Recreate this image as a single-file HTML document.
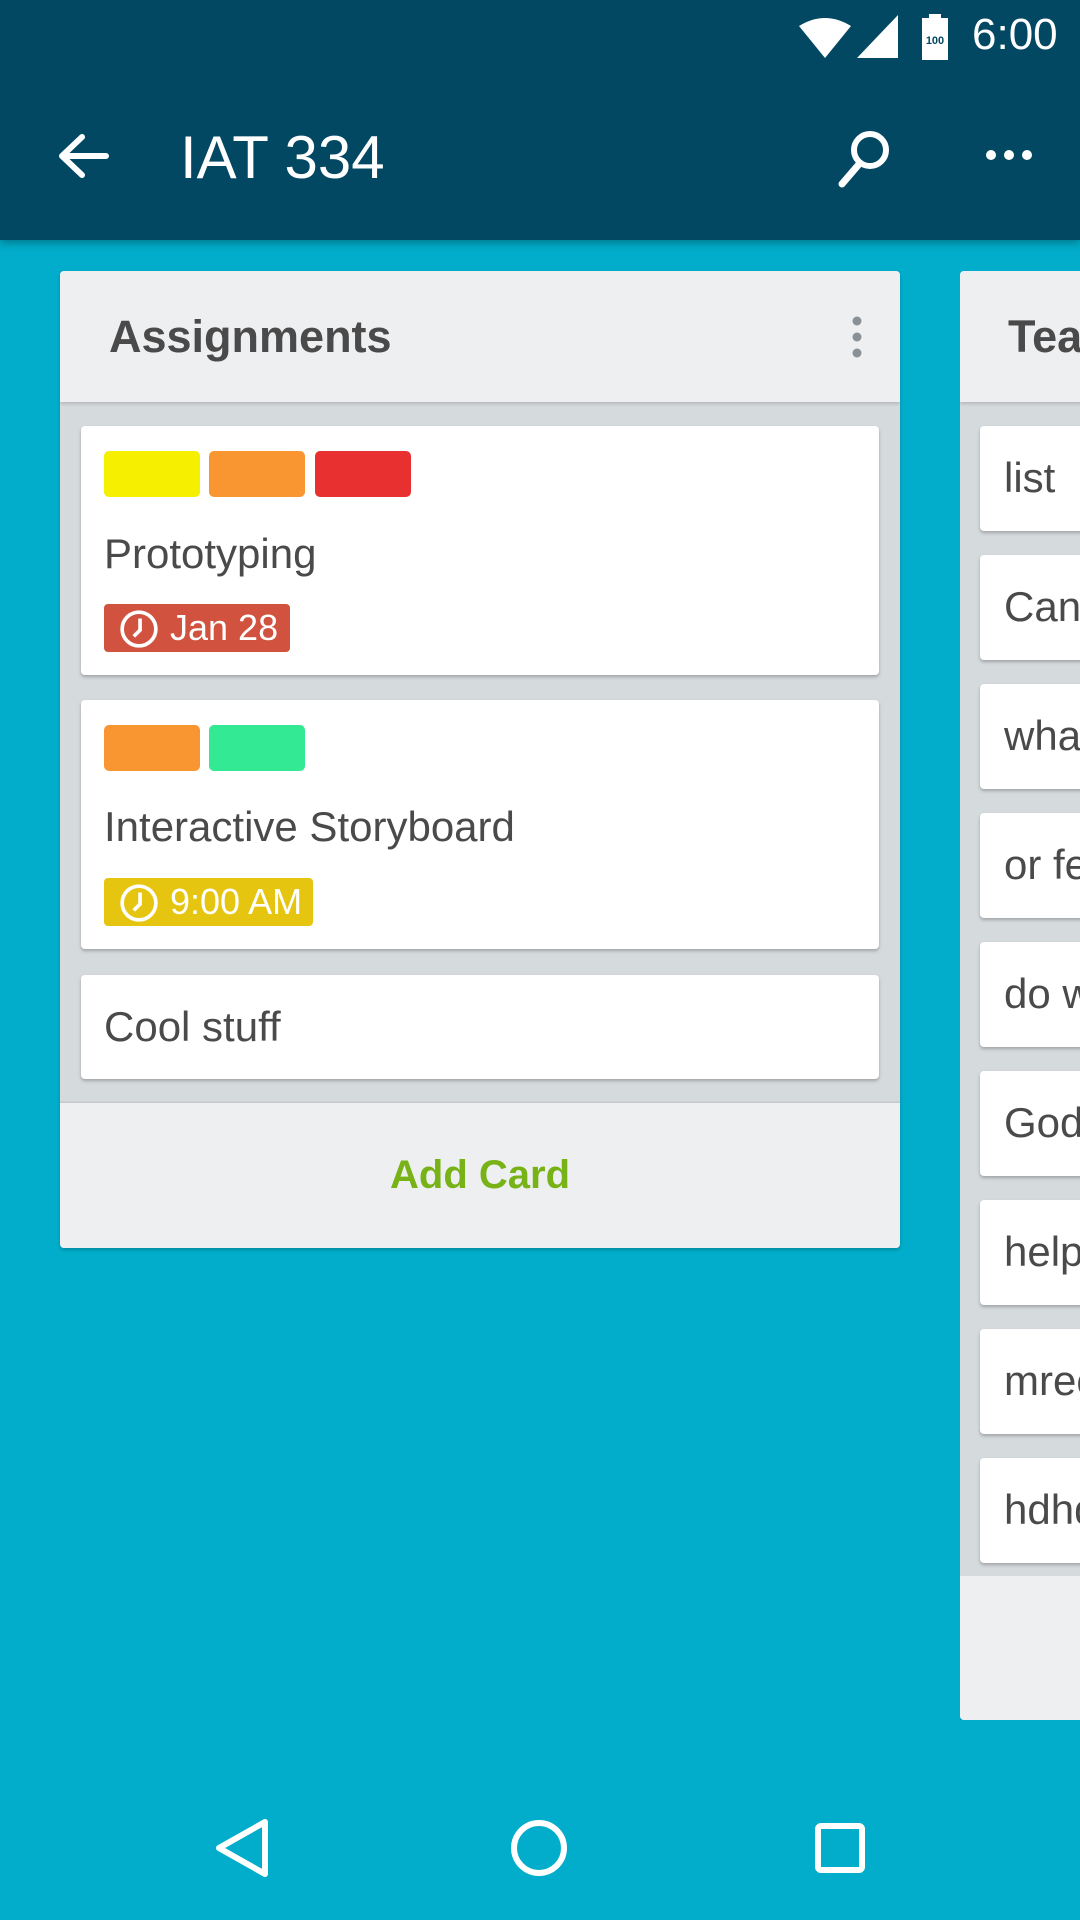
<!DOCTYPE html>
<html><head><meta charset="utf-8"><style>
*{margin:0;padding:0;box-sizing:border-box}
html,body{width:1080px;height:1920px;overflow:hidden}
body{background:#01adca;font-family:"Liberation Sans",sans-serif;position:relative}
.abs{position:absolute}
.bar{left:0;top:0;width:1080px;height:240px;background:#024862;box-shadow:0 3px 8px rgba(0,0,0,.3);z-index:2}
.list{background:#d5dadd;border-radius:4px;overflow:hidden;box-shadow:0 2px 3px rgba(0,0,0,.2)}
.hdr{background:#eeeff1;height:131px;box-shadow:0 2px 3px rgba(0,0,0,.15);position:relative}
.card{background:#fff;border-radius:4px;box-shadow:0 2px 3px rgba(0,0,0,.25);position:absolute}
.lbl{position:absolute;height:46px;width:96px;border-radius:5px}
.t{position:absolute;color:#4a4a4a;font-size:42px}
.badge{position:absolute;height:48px;border-radius:4px;color:#fff;font-size:36px;line-height:48px;padding-left:66px}
.badge svg{position:absolute;left:15px;top:5px}
</style></head><body>
<div class="abs bar">
 <svg class="abs" style="left:795px;top:14px" width="270" height="50" viewBox="0 0 270 50">
  <path d="M4 12 Q30 -4 56 12 L30 44 Z" fill="#fff"/>
  <path d="M62 44 L103 1 L103 44 Z" fill="#fff"/>
  <rect x="127" y="4" width="26" height="42" fill="#fff"/><rect x="134" y="0" width="12" height="5" fill="#fff"/>
  <text x="140" y="30" font-size="11" text-anchor="middle" fill="#024862" font-family="Liberation Sans" font-weight="bold">100</text>
 </svg>
 <div class="abs" style="left:972px;top:10px;color:#fff;font-size:44px">6:00</div>
 <svg class="abs" style="left:58px;top:134px" width="52" height="44" viewBox="0 0 52 44"><path d="M4 22 H48 M24 3 L4 22 L24 41" stroke="#fff" stroke-width="6" fill="none" stroke-linecap="round" stroke-linejoin="round"/></svg>
 <div class="abs" style="left:180px;top:123px;color:#fff;font-size:60px">IAT 334</div>
 <svg class="abs" style="left:832px;top:128px" width="64" height="60" viewBox="0 0 64 60"><circle cx="38" cy="22" r="16" stroke="#fff" stroke-width="6" fill="none"/><path d="M28 35 L10 56" stroke="#fff" stroke-width="7" stroke-linecap="round"/></svg>
 <svg class="abs" style="left:982px;top:146px" width="54" height="18"><circle cx="9" cy="9" r="5" fill="#fff"/><circle cx="27" cy="9" r="5" fill="#fff"/><circle cx="45" cy="9" r="5" fill="#fff"/></svg>
</div>

<div class="abs list" style="left:60px;top:271px;width:840px;height:977px">
 <div class="hdr"><div class="abs" style="left:49px;top:40px;font-size:45px;font-weight:bold;color:#4a4a4a">Assignments</div>
  <svg class="abs" style="left:789px;top:43px" width="16" height="50"><circle cx="8" cy="7" r="4.5" fill="#8a9196"/><circle cx="8" cy="23" r="4.5" fill="#8a9196"/><circle cx="8" cy="39" r="4.5" fill="#8a9196"/></svg>
 </div>
 <div class="card" style="left:21px;top:155px;width:798px;height:249px">
  <div class="lbl" style="left:23px;top:25px;background:#f6ef00"></div>
  <div class="lbl" style="left:128px;top:25px;background:#fa9632"></div>
  <div class="lbl" style="left:234px;top:25px;background:#e83030"></div>
  <div class="t" style="left:23px;top:104px">Prototyping</div>
  <div class="badge" style="left:23px;top:178px;width:186px;background:#d0523f"><svg width="40" height="40" viewBox="0 0 38 38"><circle cx="19" cy="19" r="16" stroke="#fff" stroke-width="3.5" fill="none"/><path d="M20 9 V20 L14 26" stroke="#fff" stroke-width="3.5" fill="none"/></svg>Jan 28</div>
 </div>
 <div class="card" style="left:21px;top:429px;width:798px;height:249px">
  <div class="lbl" style="left:23px;top:25px;background:#fa9632"></div>
  <div class="lbl" style="left:128px;top:25px;background:#33e994"></div>
  <div class="t" style="left:23px;top:103px">Interactive Storyboard</div>
  <div class="badge" style="left:23px;top:178px;width:209px;background:#e5c50f"><svg width="40" height="40" viewBox="0 0 38 38"><circle cx="19" cy="19" r="16" stroke="#fff" stroke-width="3.5" fill="none"/><path d="M20 9 V20 L14 26" stroke="#fff" stroke-width="3.5" fill="none"/></svg>9:00 AM</div>
 </div>
 <div class="card" style="left:21px;top:704px;width:798px;height:104px">
  <div class="t" style="left:23px;top:28px">Cool stuff</div>
 </div>
 <div class="abs" style="left:0;top:832px;width:840px;height:145px;background:#eeeff1;box-shadow:0 -1px 2px rgba(0,0,0,.12);text-align:center;line-height:145px;color:#77b216;font-size:40px;font-weight:bold">Add Card</div>
</div>

<div class="abs" style="left:960px;top:271px;width:120px;height:1449px;overflow:hidden">
<div class="abs list" style="left:0;top:0;width:200px;height:1449px">
 <div class="hdr"><div class="abs" style="left:48px;top:40px;font-size:45px;font-weight:bold;color:#4a4a4a">Team</div></div>
 <div class="card" style="left:20px;top:155px;width:180px;height:105px"><div class="t" style="left:24px;top:28px">list</div></div>
 <div class="card" style="left:20px;top:284px;width:180px;height:105px"><div class="t" style="left:24px;top:28px">Canvas</div></div>
 <div class="card" style="left:20px;top:413px;width:180px;height:105px"><div class="t" style="left:24px;top:28px">what</div></div>
 <div class="card" style="left:20px;top:542px;width:180px;height:105px"><div class="t" style="left:24px;top:28px">or few</div></div>
 <div class="card" style="left:20px;top:671px;width:180px;height:105px"><div class="t" style="left:24px;top:28px">do we</div></div>
 <div class="card" style="left:20px;top:800px;width:180px;height:105px"><div class="t" style="left:24px;top:28px">God</div></div>
 <div class="card" style="left:20px;top:929px;width:180px;height:105px"><div class="t" style="left:24px;top:28px">help</div></div>
 <div class="card" style="left:20px;top:1058px;width:180px;height:105px"><div class="t" style="left:24px;top:28px">mrec</div></div>
 <div class="card" style="left:20px;top:1187px;width:180px;height:105px"><div class="t" style="left:24px;top:28px">hdhd</div></div>
 <div class="abs" style="left:0;top:1305px;width:200px;height:144px;background:#eeeff1"></div>
</div>
</div>

<svg class="abs" style="left:0;top:1776px" width="1080" height="144">
 <path d="M265 46 L219 72 L265 98 Z" stroke="#fff" stroke-width="6" fill="none" stroke-linejoin="round"/>
 <circle cx="539" cy="72" r="25" stroke="#fff" stroke-width="6" fill="none"/>
 <rect x="818" y="50" width="44" height="44" rx="3" stroke="#fff" stroke-width="6" fill="none"/>
</svg>
</body></html>
